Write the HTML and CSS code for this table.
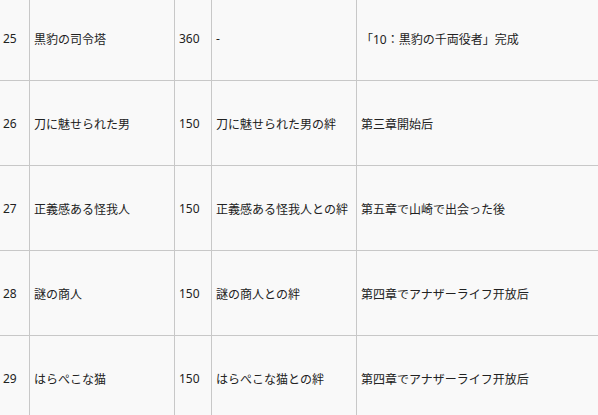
FILE: index.html
```html
<!DOCTYPE html>
<html lang="ja">
<head>
<meta charset="utf-8">
<link rel="stylesheet" href="styles.css">
</head>
<body>
<div class="table">
  <div class="cell">25</div>
  <div class="cell">黒豹の司令塔</div>
  <div class="cell">360</div>
  <div class="cell">-</div>
  <div class="cell">「10：黒豹の千両役者」完成</div>

  <div class="cell">26</div>
  <div class="cell">刀に魅せられた男</div>
  <div class="cell">150</div>
  <div class="cell">刀に魅せられた男の絆</div>
  <div class="cell">第三章開始后</div>

  <div class="cell">27</div>
  <div class="cell">正義感ある怪我人</div>
  <div class="cell">150</div>
  <div class="cell">正義感ある怪我人との絆</div>
  <div class="cell">第五章で山崎で出会った後</div>

  <div class="cell">28</div>
  <div class="cell">謎の商人</div>
  <div class="cell">150</div>
  <div class="cell">謎の商人との絆</div>
  <div class="cell">第四章でアナザーライフ开放后</div>

  <div class="cell">29</div>
  <div class="cell">はらぺこな猫</div>
  <div class="cell">150</div>
  <div class="cell">はらぺこな猫との絆</div>
  <div class="cell">第四章でアナザーライフ开放后</div>
</div>
</body>
</html>
```
FILE: styles.css
```css
html, body {
  margin: 0;
  padding: 0;
  overflow: hidden;
  background: #f9f9f9;
}
.table {
  display: grid;
  grid-template-columns: 30px 144px 36px 144px 1fr;
  grid-auto-rows: 84px;
  gap: 1px;
  padding: 1px;
  margin: -5px 0 0 -2px;
  width: 660px;
  background: #c8c8c8;
  font-family: "Noto Sans", "Noto Sans CJK JP", sans-serif;
  font-size: 12px;
  color: #222;
}
.cell {
  background: #f9f9f9;
  display: flex;
  align-items: center;
  padding: 1px 4px 0;
  white-space: nowrap;
  overflow: hidden;
}
```
